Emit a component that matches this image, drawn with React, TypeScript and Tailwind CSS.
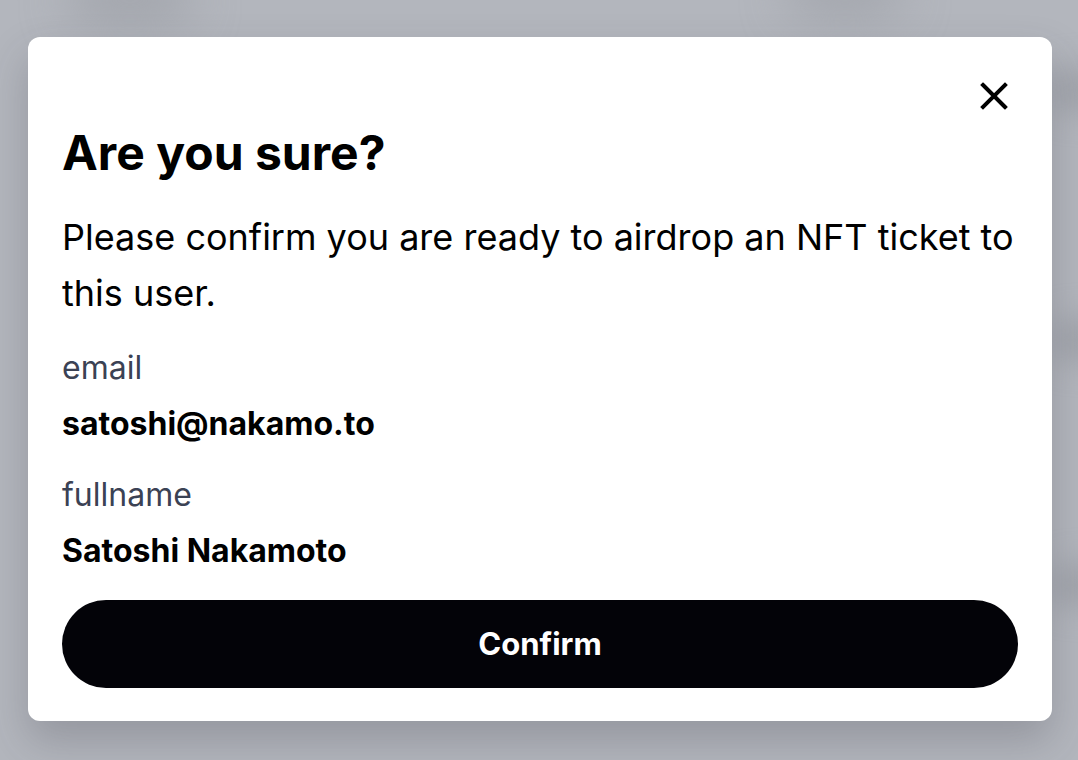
const fields = [
  { label: "email", value: "satoshi@nakamo.to" },
  { label: "fullname", value: "Satoshi Nakamoto" },
];

export default function App() {
  return (
    <div className="relative w-[1078px] h-[760px] overflow-hidden bg-[#b3b6bd] font-['Inter',sans-serif] pl-[28px] pt-[37px]">
      {/* blurred page content behind the overlay */}
      <div className="absolute left-[70px] -top-[20px] w-[120px] h-[40px] rounded-full bg-[#9ea1a8] blur-xl" />
      <div className="absolute left-[790px] -top-[24px] w-[110px] h-[36px] rounded-full bg-[#9ea1a8] blur-xl" />
      <div className="absolute left-[1050px] top-[70px] w-[60px] h-[40px] rounded-full bg-[#9ea1a8] blur-lg" />
      <div className="absolute left-[1050px] top-[320px] w-[60px] h-[40px] rounded-full bg-[#9ea1a8] blur-lg" />
      <div className="absolute left-[1050px] top-[565px] w-[60px] h-[40px] rounded-full bg-[#9ea1a8] blur-lg" />

      <div className="relative w-[1024px] bg-white rounded-[12px] shadow-[0_20px_40px_rgba(60,60,70,0.25)] px-[34px] pt-[34px] pb-[33px] flex flex-col">
        <div className="flex justify-end h-[54px] items-center">
          <button className="w-[40px] h-[40px] mr-[4px] -mt-[4px] flex items-center justify-center text-black">
            <svg width="28" height="28" viewBox="0 0 28 28" fill="none">
              <path d="M3 3L25 25M25 3L3 25" stroke="currentColor" strokeWidth="4" strokeLinecap="square" />
            </svg>
          </button>
        </div>
        <h2 className="text-5xl leading-[56px] font-bold text-black">Are you sure?</h2>
        <p className="mt-[28px] text-[36px] leading-[56px] text-black">
          Please confirm you are ready to airdrop an NFT ticket to this user.
        </p>
        <div className="mt-[19px] flex flex-col gap-[15px]">
          {fields.map((f) => (
            <div key={f.label} className="flex flex-col">
              <span className="text-[32px] leading-[56px] text-[#3b4254]">{f.label}</span>
              <span className="text-[32px] leading-[56px] font-bold text-black">{f.value}</span>
            </div>
          ))}
        </div>
        <button className="mt-[21px] w-full h-[88px] rounded-full bg-[#030308] text-white text-[31px] font-bold">
          Confirm
        </button>
      </div>
    </div>
  );
}
